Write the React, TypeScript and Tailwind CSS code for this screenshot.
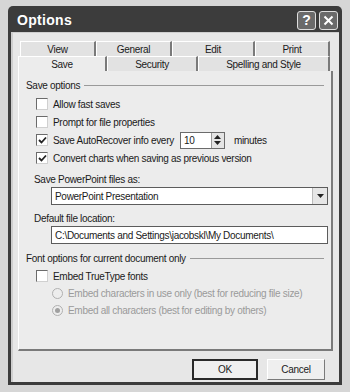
import React from "react";

const font = { fontFamily: '"Liberation Sans", Arial, sans-serif' };

const Check = ({ checked, label }: { checked?: boolean; label: string }) => (
  <div className="flex items-center gap-[5px] h-[18px]">
    <div className="w-[12px] h-[12px] bg-white border border-[#6b6b6b] border-r-[#d0d0d0] border-b-[#d0d0d0] flex items-center justify-center">
      {checked && (
        <svg width="9" height="9" viewBox="0 0 9 9">
          <path d="M1 4 L3.5 6.5 L8 1.5" stroke="#222" strokeWidth="1.8" fill="none" />
        </svg>
      )}
    </div>
    <span className="text-[#1a1a1a]">{label}</span>
  </div>
);

const Radio = ({ checked, label }: { checked?: boolean; label: string }) => (
  <div className="flex items-center gap-[5px] h-[17px] text-[#9a9a9a] whitespace-nowrap">
    <div className="w-[11px] h-[11px] rounded-full border border-[#b0b0b0] bg-[#ededed] flex items-center justify-center">
      {checked && <div className="w-[5px] h-[5px] rounded-full bg-[#a0a0a0]" />}
    </div>
    <span>{label}</span>
  </div>
);

const Group = ({ title }: { title: string }) => (
  <div className="flex items-center gap-[4px] h-[16px]">
    <span className="text-[#1a1a1a]">{title}</span>
    <div className="flex-1 border-t border-[#9a9a9a]" />
  </div>
);

const Tab = ({ label, w, active }: { label: string; w: string; active?: boolean }) => (
  <div
    className={`${w} h-[15px] flex items-center justify-center border-l border-t border-white border-r-2 border-r-[#7a7a7a] ${
      active ? "bg-[#ececec]" : "bg-[#e2e2e2]"
    }`}
  >
    {label}
  </div>
);

export default function App() {
  return (
    <div className="w-[350px] h-[392px] bg-[#d6d6d6] pl-[8px] pt-[6px] text-[10px] tracking-[-0.3px]" style={font}>
      <div className="w-[334px] h-[379px] bg-[#3c3c3c] p-[3px] rounded-t-[5px] flex flex-col">
        <div className="h-[23px] flex items-center justify-between pl-[6px] pr-[1px]">
          <span className="text-white font-bold text-[14px] tracking-[0.3px]">Options</span>
          <div className="flex gap-[3px]">
            <div className="w-[19px] h-[19px] rounded-[3px] border border-[#ddd] bg-[#6a6a6a] flex items-center justify-center text-white font-bold text-[14px]">
              ?
            </div>
            <div className="w-[19px] h-[19px] rounded-[3px] border border-[#ddd] bg-[#6a6a6a] flex items-center justify-center">
              <svg width="11" height="11" viewBox="0 0 11 11">
                <path d="M1.5 1.5 L9.5 9.5 M9.5 1.5 L1.5 9.5" stroke="white" strokeWidth="2" />
              </svg>
            </div>
          </div>
        </div>
        <div className="flex-1 bg-[#e7e7e7] border-l-2 border-t border-[#cfcfcf] flex flex-col pl-[5px] pr-[6px] pt-[8px] text-[#1a1a1a]">
          <div className="flex pl-[2px]">
            <Tab label="View" w="w-[76px]" />
            <Tab label="General" w="w-[76px]" />
            <Tab label="Edit" w="w-[83px]" />
            <Tab label="Print" w="w-[75px]" />
          </div>
          <div className="flex">
            <Tab label="Save" w="w-[89px]" active />
            <Tab label="Security" w="w-[91px]" />
            <Tab label="Spelling and Style" w="w-[132px]" />
          </div>
          <div className="h-[280px] bg-[#ececec] border-l border-white border-r-2 border-r-[#7a7a7a] border-b-2 border-b-[#7a7a7a] px-[7px] pt-[6px] flex flex-col">
            <Group title="Save options" />
            <div className="pl-[10px] pt-[2px] flex flex-col">
              <Check label="Allow fast saves" />
              <Check label="Prompt for file properties" />
              <div className="flex items-center h-[18px]">
                <Check checked label="Save AutoRecover info every" />
                <div className="ml-[6px] w-[45px] h-[17px] bg-white border border-[#6b6b6b] flex items-center justify-between pl-[3px]">
                  <span>10</span>
                  <div className="w-[13px] h-full border-l border-[#999] bg-[#e4e4e4] flex flex-col items-center justify-center gap-[2px]">
                    <svg width="7" height="4" viewBox="0 0 7 4"><path d="M0 4 L3.5 0 L7 4Z" fill="#222" /></svg>
                    <svg width="7" height="4" viewBox="0 0 7 4"><path d="M0 0 L3.5 4 L7 0Z" fill="#222" /></svg>
                  </div>
                </div>
                <span className="ml-[9px]">minutes</span>
              </div>
              <Check checked label="Convert charts when saving as previous version" />
            </div>
            <div className="pl-[8px] pt-[5px] flex flex-col">
              <span className="h-[14px]">Save PowerPoint files as:</span>
              <div className="mt-[1px] ml-[17px] w-[277px] h-[18px] bg-white border border-[#5c5c5c] flex items-center justify-between pl-[3px]">
                <span>PowerPoint Presentation</span>
                <div className="w-[15px] h-full bg-[#e6e6e6] border-l border-[#bbb] flex items-center justify-center">
                  <svg width="7" height="4" viewBox="0 0 7 4"><path d="M0 0 L3.5 4 L7 0Z" fill="#222" /></svg>
                </div>
              </div>
              <span className="mt-[6px] h-[14px]">Default file location:</span>
              <div className="mt-[1px] ml-[17px] w-[277px] h-[18px] bg-white border border-[#5c5c5c] flex items-center pl-[3px]">
                <span>C:\Documents and Settings\jacobskl\My Documents\</span>
              </div>
            </div>
            <div className="mt-[6px]">
              <Group title="Font options for current document only" />
            </div>
            <div className="pl-[10px] pt-[1px] flex flex-col">
              <Check label="Embed TrueType fonts" />
              <div className="pl-[16px] flex flex-col">
                <Radio label="Embed characters in use only (best for reducing file size)" />
                <Radio checked label="Embed all characters (best for editing by others)" />
              </div>
            </div>
          </div>
          <div className="flex justify-end gap-[9px] pt-[8px] pr-[8px]">
            <div className="w-[66px] h-[21px] border-2 border-[#2a2a2a] bg-[#efefef] flex items-center justify-center">OK</div>
            <div className="w-[58px] h-[21px] border border-[#7a7a7a] border-l-white border-t-white bg-[#efefef] flex items-center justify-center">Cancel</div>
          </div>
        </div>
      </div>
    </div>
  );
}
